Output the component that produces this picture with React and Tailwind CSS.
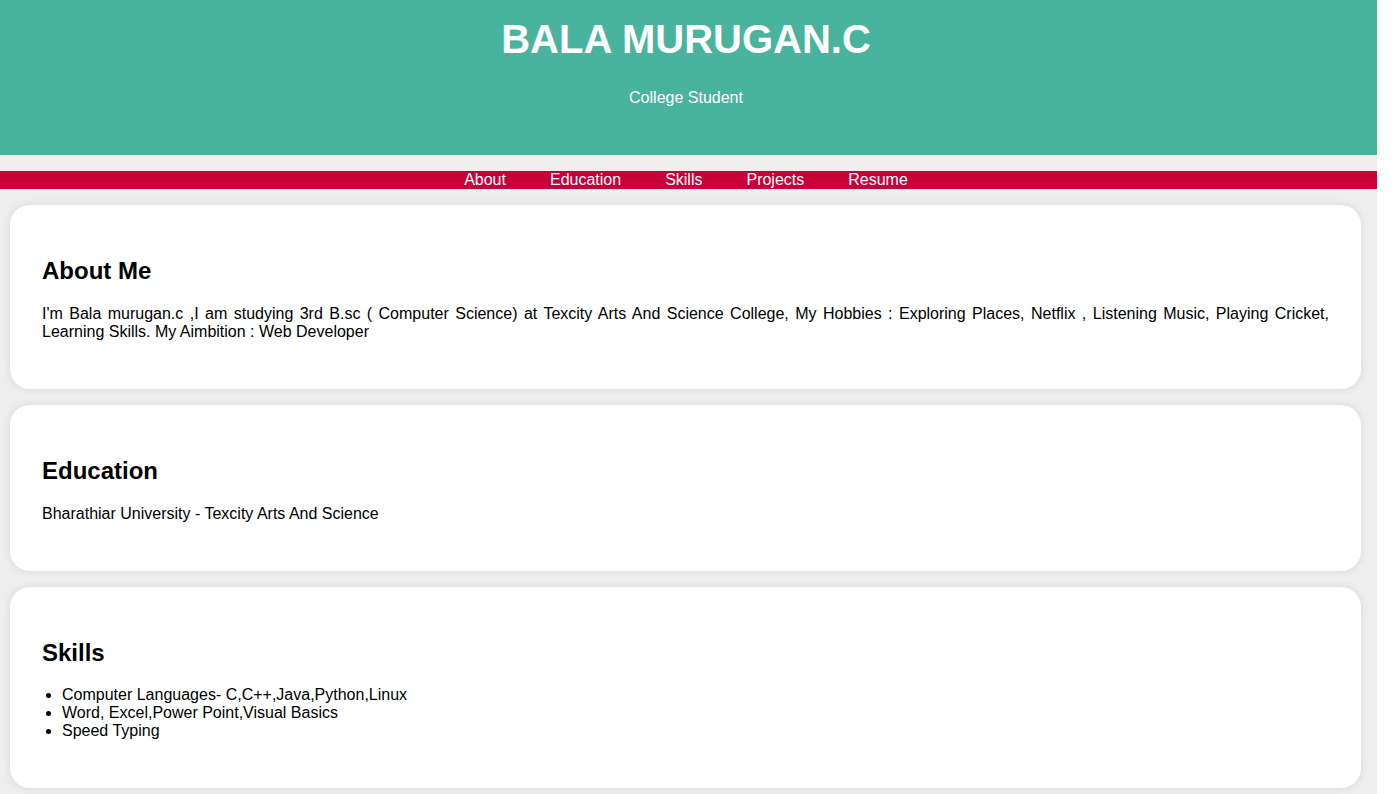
import React from 'react';

const links = ['About', 'Education', 'Skills', 'Projects', 'Resume'];

const Section = ({ title, children }) => (
    <section className="ml-[10px] mr-[16px] mb-4 rounded-[20px] bg-white p-8 shadow-[0_0_10px_rgba(0,0,0,0.1)]">
        <h2 className="mt-[0.83em] mb-[0.83em] text-2xl font-bold leading-[normal] text-black">{title}</h2>
        {children}
    </section>
);

const App = () => {
    return (
        <div className="min-h-screen w-[1377px] bg-[#efefef] text-black font-['Liberation_Sans',Arial,sans-serif] text-base leading-[normal]">
            <header className="bg-[#48b49e] pt-4 pb-[48px] pr-[5px] text-center text-white">
                <h1 className="text-[40px] font-bold leading-[46px]">BALA MURUGAN.C</h1>
                <p className="mt-[27px]">College Student</p>
            </header>

            <nav className="mt-4 mb-4 bg-[#c8003a] pr-[5px] text-center leading-[18px]">
                {links.map((l) => (
                    <a key={l} href={`#${l.toLowerCase()}`} className="mx-[22px] inline-block text-white">
                        {l}
                    </a>
                ))}
            </nav>

            <Section title="About Me">
                <p className="mb-4 text-justify">
                    I'm Bala murugan.c ,I am studying 3rd B.sc ( Computer Science) at Texcity Arts And Science College, My Hobbies : Exploring Places, Netflix , Listening Music, Playing Cricket, Learning Skills. My Aimbition : Web Developer
                </p>
            </Section>

            <Section title="Education">
                <p className="mb-4">Bharathiar University - Texcity Arts And Science</p>
            </Section>

            <Section title="Skills">
                <ul className="mb-4 list-disc pl-5">
                    <li>Computer Languages- C,C++,Java,Python,Linux</li>
                    <li>Word, Excel,Power Point,Visual Basics</li>
                    <li>Speed Typing</li>
                </ul>
            </Section>
        </div>
    );
};
export default App;
